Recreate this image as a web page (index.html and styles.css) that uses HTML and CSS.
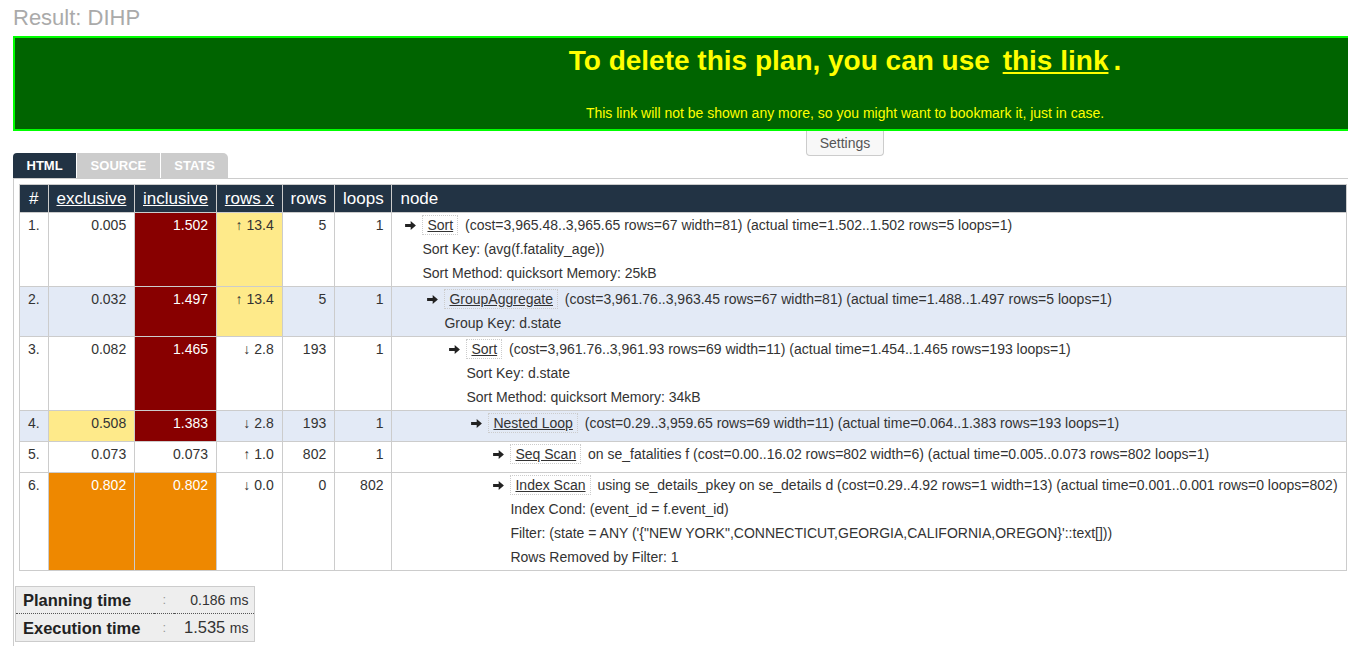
FILE: index.html
```html
<!DOCTYPE html>
<html>
<head>
<meta charset="utf-8">
<title>Result: DIHP</title>
<link rel="stylesheet" href="styles.css">
</head>
<body>
<div class="page">
  <h1 class="title">Result: DIHP</h1>
  <div class="banner">
    <div class="banner-main">To delete this plan, you can use <a class="banner-link" href="#">this link</a>.</div>
    <div class="banner-sub">This link will not be shown any more, so you might want to bookmark it, just in case.</div>
  </div>
  <div class="settings-bar"><button class="settings">Settings</button></div>
  <div class="tabs">
    <span class="tab active first">HTML</span>
    <span class="tab">SOURCE</span>
    <span class="tab last">STATS</span>
  </div>
  <div class="content">
    <table class="plan">
      <thead>
        <tr>
          <th>#</th>
          <th><u>exclusive</u></th>
          <th><u>inclusive</u></th>
          <th><u>rows x</u></th>
          <th>rows</th>
          <th>loops</th>
          <th class="node-h">node</th>
        </tr>
      </thead>
      <tbody>
        <tr>
          <td class="num">1.</td>
          <td class="val">0.005</td>
          <td class="val red">1.502</td>
          <td class="val yellow">↑ 13.4</td>
          <td class="val">5</td>
          <td class="val">1</td>
          <td class="node">
            <div class="lvl0">
              <div class="title"><svg class="arr" viewBox="0 0 12 10"><path d="M0 3.3H6.2V0L12 5L6.2 10V6.7H0Z"/></svg><a class="op" href="#">Sort</a> (cost=3,965.48..3,965.65 rows=67 width=81) (actual time=1.502..1.502 rows=5 loops=1)</div>
              <div class="detail">Sort Key: (avg(f.fatality_age))</div>
              <div class="detail">Sort Method: quicksort Memory: 25kB</div>
            </div>
          </td>
        </tr>
        <tr class="alt">
          <td class="num">2.</td>
          <td class="val">0.032</td>
          <td class="val red">1.497</td>
          <td class="val yellow">↑ 13.4</td>
          <td class="val">5</td>
          <td class="val">1</td>
          <td class="node">
            <div class="lvl1">
              <div class="title"><svg class="arr" viewBox="0 0 12 10"><path d="M0 3.3H6.2V0L12 5L6.2 10V6.7H0Z"/></svg><a class="op" href="#">GroupAggregate</a> (cost=3,961.76..3,963.45 rows=67 width=81) (actual time=1.488..1.497 rows=5 loops=1)</div>
              <div class="detail">Group Key: d.state</div>
            </div>
          </td>
        </tr>
        <tr>
          <td class="num">3.</td>
          <td class="val">0.082</td>
          <td class="val red">1.465</td>
          <td class="val">↓ 2.8</td>
          <td class="val">193</td>
          <td class="val">1</td>
          <td class="node">
            <div class="lvl2">
              <div class="title"><svg class="arr" viewBox="0 0 12 10"><path d="M0 3.3H6.2V0L12 5L6.2 10V6.7H0Z"/></svg><a class="op" href="#">Sort</a> (cost=3,961.76..3,961.93 rows=69 width=11) (actual time=1.454..1.465 rows=193 loops=1)</div>
              <div class="detail">Sort Key: d.state</div>
              <div class="detail">Sort Method: quicksort Memory: 34kB</div>
            </div>
          </td>
        </tr>
        <tr class="alt">
          <td class="num">4.</td>
          <td class="val yellow">0.508</td>
          <td class="val red">1.383</td>
          <td class="val">↓ 2.8</td>
          <td class="val">193</td>
          <td class="val">1</td>
          <td class="node">
            <div class="lvl3">
              <div class="title"><svg class="arr" viewBox="0 0 12 10"><path d="M0 3.3H6.2V0L12 5L6.2 10V6.7H0Z"/></svg><a class="op" href="#">Nested Loop</a> (cost=0.29..3,959.65 rows=69 width=11) (actual time=0.064..1.383 rows=193 loops=1)</div>
            </div>
          </td>
        </tr>
        <tr>
          <td class="num">5.</td>
          <td class="val">0.073</td>
          <td class="val">0.073</td>
          <td class="val">↑ 1.0</td>
          <td class="val">802</td>
          <td class="val">1</td>
          <td class="node">
            <div class="lvl4">
              <div class="title"><svg class="arr" viewBox="0 0 12 10"><path d="M0 3.3H6.2V0L12 5L6.2 10V6.7H0Z"/></svg><a class="op" href="#">Seq Scan</a> on se_fatalities f (cost=0.00..16.02 rows=802 width=6) (actual time=0.005..0.073 rows=802 loops=1)</div>
            </div>
          </td>
        </tr>
        <tr>
          <td class="num">6.</td>
          <td class="val orange">0.802</td>
          <td class="val orange">0.802</td>
          <td class="val">↓ 0.0</td>
          <td class="val">0</td>
          <td class="val">802</td>
          <td class="node">
            <div class="lvl4">
              <div class="title"><svg class="arr" viewBox="0 0 12 10"><path d="M0 3.3H6.2V0L12 5L6.2 10V6.7H0Z"/></svg><a class="op" href="#">Index Scan</a> using se_details_pkey on se_details d (cost=0.29..4.92 rows=1 width=13) (actual time=0.001..0.001 rows=0 loops=802)</div>
              <div class="detail">Index Cond: (event_id = f.event_id)</div>
              <div class="detail">Filter: (state = ANY ('{"NEW YORK",CONNECTICUT,GEORGIA,CALIFORNIA,OREGON}'::text[]))</div>
              <div class="detail">Rows Removed by Filter: 1</div>
            </div>
          </td>
        </tr>
      </tbody>
    </table>

    <table class="timing">
      <tr>
        <td class="t-label">Planning time</td>
        <td class="t-sep">:</td>
        <td class="t-val"><span class="small">0.186</span> <span class="unit">ms</span></td>
      </tr>
      <tr class="t-second">
        <td class="t-label">Execution time</td>
        <td class="t-sep">:</td>
        <td class="t-val"><span class="big">1.535</span> <span class="unit">ms</span></td>
      </tr>
    </table>
  </div>
</div>
</body>
</html>
```

FILE: styles.css
```css
html, body {
  margin: 0;
  padding: 0;
  background: #fff;
  overflow-x: hidden;
}

body {
  font-family: "Liberation Sans", Arial, sans-serif;
  color: #333;
}

.page {
  width: 1664px;
  padding: 5px 0 0 13px;
}

.title {
  margin: 0;
  font-size: 22px;
  line-height: 26px;
  font-weight: normal;
  color: #aaa;
}

.banner {
  margin-top: 5px;
  border: 2px solid #00ff00;
  background: #006400;
  color: #ffff00;
  text-align: center;
  padding: 7px 0 8px;
}

.banner-main {
  font-size: 28px;
  font-weight: bold;
  line-height: 32px;
}

.banner-link {
  color: #ffff00;
  text-decoration: underline;
  margin: 0 5px 0 5px;
}

.banner-sub {
  margin-top: 28px;
  font-size: 14px;
  line-height: 16px;
}

.settings-bar {
  height: 22px;
  text-align: center;
}

.settings {
  font-family: "Liberation Sans", Arial, sans-serif;
  font-size: 14px;
  color: #555;
  background: #f8f8f8;
  border: 1px solid #ccc;
  border-top: none;
  border-radius: 0 0 4px 4px;
  height: 25px;
  width: 78px;
  padding: 0;
  vertical-align: top;
}

.tabs {
  display: flex;
  gap: 1px;
  height: 25px;
}

.tab {
  display: block;
  background: #cccccc;
  color: #fff;
  font-size: 13px;
  font-weight: bold;
  line-height: 25px;
  padding: 0 13.5px;
}

.tab.active {
  background: #223344;
}

.tab.first {
  border-top-left-radius: 4px;
}

.tab.last {
  border-top-right-radius: 5px;
}

.content {
  border-top: 1px solid #ccc;
  border-left: 1px solid #ccc;
  padding: 5px 0 0 5px;
  min-height: 480px;
}

.plan {
  border-collapse: collapse;
  font-size: 14px;
  color: #333;
}

.plan th {
  background: #223344;
  color: #fff;
  font-size: 17px;
  font-weight: normal;
  line-height: 27px;
  padding: 0 7.8px;
  border: 1px solid #ccc;
  text-align: center;
  white-space: nowrap;
}

.plan th.node-h {
  text-align: left;
  padding-left: 8px;
}

.plan th u {
  text-decoration: underline;
}

.plan td {
  border: 1px solid #ccc;
  vertical-align: top;
  line-height: 24px;
  padding: 0 8px 6px;
  white-space: nowrap;
}

.plan td.num {
  text-align: left;
}

.plan td.val {
  text-align: right;
}

.plan td.node {
  padding: 0 8px 1px 0;
}

.plan tr.alt td {
  background: #e3eaf6;
}

.plan tr td.red {
  background: #880000;
  color: #fff;
}

.plan tr td.yellow {
  background: #feea8a;
}

.plan tr td.orange {
  background: #ee8800;
  color: #fff;
}

.lvl0 { padding-left: 13px; }
.lvl1 { padding-left: 35px; }
.lvl2 { padding-left: 57px; }
.lvl3 { padding-left: 79px; }
.lvl4 { padding-left: 101px; }

.node .title {
  font-size: 14px;
  line-height: 24px;
  color: #333;
}

.arr {
  width: 11px;
  height: 9px;
  fill: #222;
  margin-right: 6px;
  vertical-align: 0px;
}

.op {
  display: inline-block;
  color: #333;
  text-decoration: underline;
  border: 1px dotted #ccc;
  padding: 0 4px;
  line-height: 18px;
  margin-right: 3px;
}

.detail {
  padding-left: 17px;
  line-height: 24px;
}

.timing {
  margin: 15px 0 0 -4px;
  border-collapse: collapse;
  background: #eee;
  border: 1px solid #ccc;
}

.timing td {
  padding: 0;
  line-height: 26px;
  white-space: nowrap;
}

.timing .t-second td {
  border-top: 1px dotted #555;
}

.t-label {
  font-weight: bold;
  font-size: 16.5px;
  padding: 0 14px 0 7px !important;
  color: #222;
}

.t-sep {
  color: #999;
  font-size: 13px;
  padding: 0 8px !important;
}

.t-val {
  text-align: right;
  padding: 0 6px 0 10px !important;
  color: #333;
}

.t-val .small {
  font-size: 14px;
}

.t-val .big {
  font-size: 16.5px;
}

.t-val .unit {
  font-size: 14px;
}
```
